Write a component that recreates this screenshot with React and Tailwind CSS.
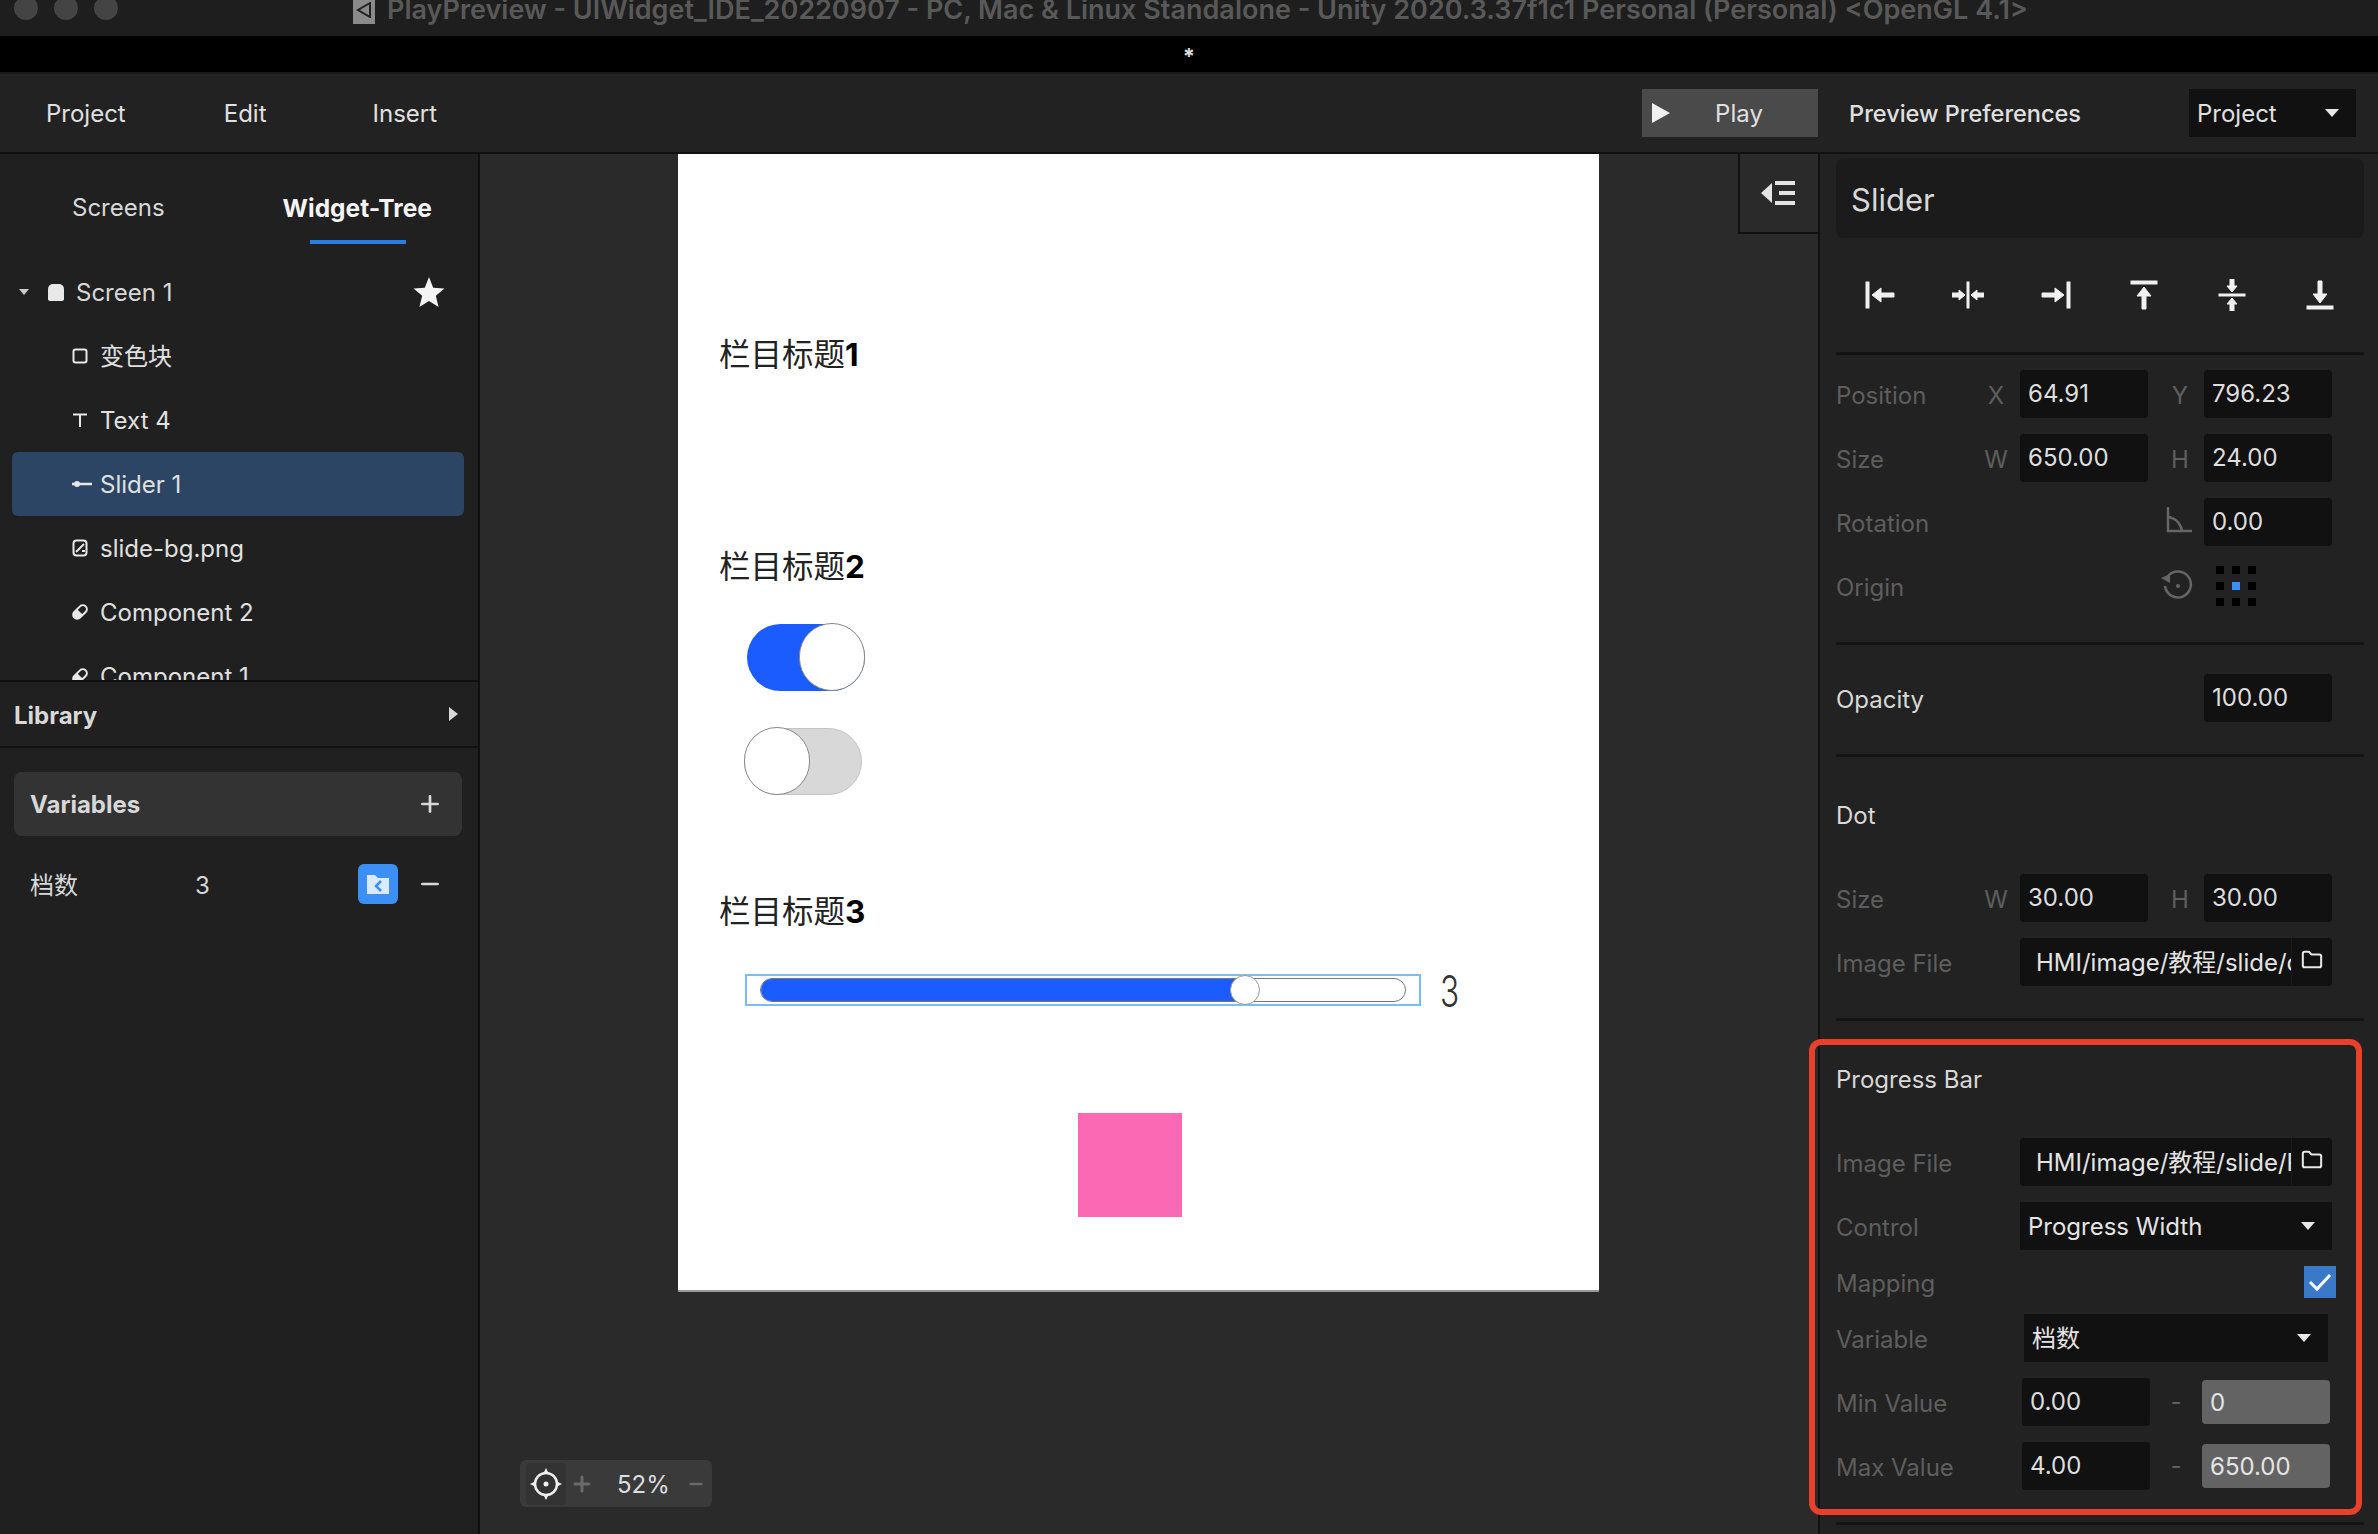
import { Folder, Plus, Minus } from 'lucide-react'

const Caret = ({ className = '' }) => (
  <svg width="16" height="10" viewBox="0 0 16 10" className={className}>
    <path d="M1 1h14L8 9z" fill="#e8e8e8" />
  </svg>
)

const Tri = ({ d, w = 32, className = '' }) => (
  <svg width={w} height={w} viewBox="0 0 32 32" className={className}>
    <g fill="#f0f0f0" stroke="#f0f0f0">{d}</g>
  </svg>
)

// alignment row in the inspector
const alignIcons = [
  <><rect x="2" y="3" width="3" height="26" /><path d="M8 16l9-7v5h13v4H17v5z" /></>,
  <><rect x="15" y="3" width="2" height="26" /><path d="M13 16l-6-5v3H0v4h7v3zM19 16l6-5v3h7v4h-7v3z" /></>,
  <><rect x="27" y="3" width="3" height="26" /><path d="M24 16l-9-7v5H2v4h13v5z" /></>,
  <><rect x="3" y="2" width="26" height="3" /><path d="M16 8l-7 9h5v13h4V17h5z" /></>,
  <><rect x="3" y="15" width="26" height="2" /><path d="M16 13l-5-6h3V0h4v7h3zM16 19l-5 6h3v7h4v-7h3z" /></>,
  <><rect x="3" y="27" width="26" height="3" /><path d="M16 24l-7-9h5V2h4v13h5z" /></>,
]

const Divider = ({ className = '' }) => <div className={`h-[3px] bg-[#141414] ${className}`} />

const Label = ({ children, w = 'w-[136px]', dim = true }) => (
  <div className={`${w} shrink-0 pt-1 ${dim ? 'text-[#5e5e5e]' : 'text-[#d8d8d8]'}`}>{children}</div>
)

const Axis = ({ children, className = 'w-[48px]' }) => (
  <div className={`${className} shrink-0 pt-1 text-center text-[#5e5e5e]`}>{children}</div>
)

const Value = ({ children, className = 'w-[128px]' }) => (
  <div className={`${className} h-12 shrink-0 rounded bg-[#111111] px-2 leading-[47px] text-[#dedede]`}>{children}</div>
)

const PairRow = ({ label, a, av, b, bv }) => (
  <div className="flex h-12 items-center">
    <Label>{label}</Label>
    <Axis>{a}</Axis>
    <Value>{av}</Value>
    <Axis className="w-[56px] pl-2">{b}</Axis>
    <Value>{bv}</Value>
  </div>
)

const SingleRow = ({ label, icon, value, dim = true }) => (
  <div className="flex h-12 items-center">
    <Label w="w-[368px]" dim={dim}>
      <div className="relative">
        {label}
        {icon}
      </div>
    </Label>
    <Value>{value}</Value>
  </div>
)

const FileRow = ({ path }) => (
  <div className="flex h-12 items-center">
    <Label w="w-[184px]">Image File</Label>
    <div className="flex h-12 w-[312px] items-center rounded bg-[#111111]">
      <div className="w-[271px] overflow-hidden whitespace-nowrap pl-4 pt-0.5 text-[#e4e4e4]">{path}</div>
      <div className="flex h-12 flex-1 items-center justify-center border-l border-[#1a1a1a]">
        <Folder size={22} strokeWidth={2.2} color="#e8e8e8" className="-mt-1" />
      </div>
    </div>
  </div>
)

const SelectRow = ({ label, value, inset = false }) => (
  <div className="flex h-12 items-center">
    <Label w={inset ? 'w-[188px]' : 'w-[184px]'}>{label}</Label>
    <div className={`flex h-12 items-center justify-between bg-[#111111] pl-2 ${inset ? 'w-[304px] pr-4' : 'w-[312px] pr-4'} text-[#e4e4e4]`}>
      <span className="pt-0.5">{value}</span>
      <Caret />
    </div>
  </div>
)

const RangeRow = ({ label, a, b }) => (
  <div className="flex h-12 items-center">
    <Label w="w-[186px]">{label}</Label>
    <Value>{a}</Value>
    <div className="w-[52px] shrink-0 text-center text-[#5e5e5e]">-</div>
    <div className="h-[44px] w-[128px] shrink-0 rounded bg-[#636363] px-2 leading-[46px] text-[#e4e4e4]">{b}</div>
  </div>
)

const TreeIcon = ({ kind }) => {
  if (kind === 'rect') {
    return (
      <svg width="16" height="16" viewBox="0 0 16 16"><rect x="1.5" y="1.5" width="13" height="13" rx="2" fill="none" stroke="#e8e8e8" strokeWidth="2" /></svg>
    )
  }
  if (kind === 'text') {
    return (
      <svg width="16" height="16" viewBox="0 0 16 16"><path d="M1 2.5h14M8 2.5V15" fill="none" stroke="#e8e8e8" strokeWidth="2" /></svg>
    )
  }
  if (kind === 'slider') {
    return (
      <svg width="20" height="16" viewBox="0 0 20 16"><path d="M0 8h20" stroke="#e8e8e8" strokeWidth="2.5" /><circle cx="5" cy="8" r="3" fill="#e8e8e8" /></svg>
    )
  }
  if (kind === 'image') {
    return (
      <svg width="16" height="18" viewBox="0 0 16 18"><rect x="1.5" y="1.5" width="13" height="15" rx="3" fill="none" stroke="#e8e8e8" strokeWidth="2" /><path d="M4 13l8-8M10 12h3" stroke="#e8e8e8" strokeWidth="2" /></svg>
    )
  }
  return (
    <svg width="16" height="18" viewBox="0 0 16 18">
      <g transform="rotate(45 8 9)">
        <rect x="4" y="1" width="8" height="16" rx="4" fill="none" stroke="#e8e8e8" strokeWidth="2" />
        <path d="M4 9h8v4a4 4 0 0 1-8 0z" fill="#e8e8e8" />
      </g>
    </svg>
  )
}

const treeItems = [
  { kind: 'rect', name: '变色块' },
  { kind: 'text', name: 'Text 4' },
  { kind: 'slider', name: 'Slider 1', active: true },
  { kind: 'image', name: 'slide-bg.png' },
  { kind: 'comp', name: 'Component 2' },
  { kind: 'comp', name: 'Component 1' },
]

const LeftPanel = () => (
  <div className="flex w-[480px] shrink-0 flex-col border-r-2 border-[#111111] bg-[#202020]">
    <div className="h-[526px] shrink-0 overflow-hidden">
      <div className="relative flex h-[106px] items-center pl-[72px] pt-0.5">
        <span className="text-[#d8d8d8]">Screens</span>
        <span className="ml-[118px] text-[24.5px] font-bold text-[#f4f4f4]">Widget-Tree</span>
        <div className="absolute left-[310px] top-[86px] h-1 w-[96px] bg-[#2a7de1]" />
      </div>
      <div className="flex h-16 items-center text-[#d8d8d8]">
        <svg width="12" height="8" viewBox="0 0 12 8" className="ml-[18px]"><path d="M1 1h10L6 7z" fill="#cccccc" /></svg>
        <div className="ml-[18px] h-[17px] w-4 rounded-t-[5px] rounded-b-[2px] bg-[#e8e8e8]" />
        <span className="ml-3 flex-1 pt-0.5">Screen 1</span>
        <svg width="32" height="31" viewBox="0 0 32 31" className="mr-[33px]">
          <path d="M16 0l4.2 10.8 11.3.8-8.7 7.2 2.8 11.2L16 24l-9.6 6 2.8-11.2L.5 11.6l11.3-.8z" fill="#f4f4f4" />
        </svg>
      </div>
      {treeItems.map((item) => (
        <div key={item.name} className={`ml-3 mr-3.5 flex h-16 items-center rounded-md pl-[60px] text-[#e0e0e0] ${item.active ? 'bg-[#2c4565]' : ''}`}>
          <div className="flex w-7 shrink-0 items-center"><TreeIcon kind={item.kind} /></div>
          <span className="pt-0.5">{item.name}</span>
        </div>
      ))}
    </div>
    <div className="flex h-[68px] shrink-0 items-center justify-between border-y-2 border-[#111111] pl-[14px] pr-5">
      <span className="pt-1 font-bold text-[#d8d8d8]">Library</span>
      <svg width="9" height="14" viewBox="0 0 9 14"><path d="M0 0l9 7-9 7z" fill="#d8d8d8" /></svg>
    </div>
    <div className="ml-[14px] mr-4 mt-[24px] flex h-16 shrink-0 items-center justify-between rounded-lg bg-[#333333] pl-4 pr-[19px]">
      <span className="pt-0.5 font-bold text-[#d8d8d8]">Variables</span>
      <Plus size={26} strokeWidth={2.5} color="#d8d8d8" />
    </div>
    <div className="mt-[28px] flex h-10 shrink-0 items-center pl-[30px] text-[#d8d8d8]">
      <span className="w-[165px] pt-1">档数</span>
      <span className="w-[163px] pt-1">3</span>
      <div className="flex h-10 w-10 items-center justify-center rounded-md bg-[#3b8ff5]">
        <svg width="24" height="22" viewBox="0 0 24 22">
          <path d="M1 2h8l3 3h11v16H1z" fill="#dceaff" />
          <path d="M15 8l-5 5 5 5" fill="none" stroke="#3b8ff5" strokeWidth="2.5" />
        </svg>
      </div>
      <Minus size={26} strokeWidth={2.5} color="#d8d8d8" className="ml-[19px]" />
    </div>
  </div>
)

const Heading = ({ n, className }) => (
  <div className={`absolute left-[41px] text-[31.5px] leading-10 text-[#222222] ${className}`}>
    栏目标题<span className="font-bold text-black">{n}</span>
  </div>
)

const Artboard = () => (
  <div className="absolute left-[198px] top-0 h-[1138px] w-[921px] border-b-2 border-[#999999] bg-white">
    <Heading n="1" className="top-[181px]" />
    <Heading n="2" className="top-[393px]" />
    <Heading n="3" className="top-[738px]" />

    <div className="absolute left-[69px] top-[470px] h-[67px] w-[118px] rounded-full bg-[#1a5cff]">
      <div className="absolute right-0 top-[-1px] h-[68px] w-[66px] rounded-full border border-[#888888] bg-white" />
    </div>
    <div className="absolute left-[66px] top-[574px] h-[67px] w-[118px] rounded-full border border-[#c4c4c4] bg-[#d8d8d8]">
      <div className="absolute left-[-1px] top-[-2px] h-[68px] w-[66px] rounded-full border border-[#888888] bg-white" />
    </div>

    <div className="absolute left-[67px] top-[820px] h-[32px] w-[676px] border-2 border-[#7bbcf5]">
      <div className="absolute left-[13px] top-[2px] h-[24px] w-[646px] rounded-full border border-[#777777] bg-white">
        <div className="h-full w-[485px] rounded-full bg-[#1a5cff]" />
      </div>
      <div className="absolute left-[483px] top-[-1px] h-[30px] w-[30px] rounded-full border border-[#999999] bg-white" />
    </div>
    <div className="absolute left-[762px] top-[812px] origin-left scale-x-[0.72] text-[44px] font-light leading-[50px] text-[#333333]">3</div>

    <div className="absolute left-[400px] top-[959px] h-[104px] w-[104px] bg-[#fb69b5]" />
  </div>
)

const Canvas = () => (
  <div className="relative flex-1 bg-[#2a2a2a]">
    <Artboard />
    <div className="absolute right-0 top-0 flex h-[80px] w-[80px] items-center justify-center border-b-2 border-l-2 border-[#111111]">
      <svg width="36" height="26" viewBox="0 0 36 26">
        <path d="M0 13L11 3v20z" fill="#e4e4e4" />
        <path d="M14 3h20M18 13h16M14 23h20" stroke="#e4e4e4" strokeWidth="4" />
      </svg>
    </div>
    <div className="absolute bottom-[27px] left-[40px] flex h-[47px] w-[192px] items-center rounded-md bg-[#3a3a3a] text-[24px]">
      <div className="ml-[6px] flex h-[42px] w-[40px] items-center justify-center rounded bg-[#333333]">
        <svg width="32" height="32" viewBox="0 0 32 32">
          <circle cx="16" cy="16" r="11" fill="none" stroke="#f0f0f0" strokeWidth="2.5" />
          <circle cx="16" cy="16" r="2.5" fill="#f0f0f0" />
          <path d="M16 0l3 6h-6zM16 32l3-6h-6zM0 16l6-3v6zM32 16l-6-3v6z" fill="#f0f0f0" />
        </svg>
      </div>
      <Plus size={24} strokeWidth={3} color="#6a6a6a" className="ml-1" />
      <span className="ml-[23px] pt-0.5 text-[#dddddd]">52%</span>
      <Minus size={18} strokeWidth={3.5} color="#6a6a6a" className="ml-[17px]" />
    </div>
  </div>
)

const RightPanel = () => (
  <div className="relative w-[560px] shrink-0 border-l-2 border-[#111111] bg-[#222222] pl-4 pr-3.5 pt-1">
    <div className="flex h-20 items-center rounded-lg bg-[#1b1b1b] pl-[15px] pt-1 text-[31px] text-[#d8d8d8]">Slider</div>
    <div className="grid h-[114px] grid-cols-6 items-center justify-items-center">
      {alignIcons.map((d, i) => (
        <Tri key={i} d={d} />
      ))}
    </div>
    <Divider />
    <div className="mt-[15px] flex flex-col gap-4">
      <PairRow label="Position" a="X" av="64.91" b="Y" bv="796.23" />
      <PairRow label="Size" a="W" av="650.00" b="H" bv="24.00" />
      <SingleRow
        label="Rotation"
        value="0.00"
        icon={
          <svg width="28" height="28" viewBox="0 0 28 28" className="absolute right-[11px] top-0">
            <path d="M3 1v24h24M3 11c8 1 13 7 14 14" fill="none" stroke="#666666" strokeWidth="2.5" />
          </svg>
        }
      />
      <div className="flex h-12 items-center">
        <Label w="w-[324px]">Origin</Label>
        <svg width="36" height="36" viewBox="0 0 36 36">
          <path d="M8 8a13 13 0 1 1-3 10" fill="none" stroke="#666666" strokeWidth="2.5" />
          <path d="M1 10l9-4 0 9z" fill="#666666" />
          <circle cx="18" cy="18" r="2" fill="#666666" />
        </svg>
        <div className="ml-5 grid grid-cols-3 gap-2">
          {[0, 1, 2, 3, 4, 5, 6, 7, 8].map((i) => (
            <div key={i} className={`h-2 w-2 ${i === 4 ? 'bg-[#3b8ff5]' : 'bg-black'}`} />
          ))}
        </div>
      </div>
    </div>
    <Divider className="mt-[32px]" />
    <div className="mt-[29px]">
      <SingleRow label="Opacity" value="100.00" dim={false} />
    </div>
    <Divider className="mt-[32px]" />
    <div className="flex h-[117px] items-center text-[#d8d8d8]">Dot</div>
    <div className="flex flex-col gap-4">
      <PairRow label="Size" a="W" av="30.00" b="H" bv="30.00" />
      <FileRow path="HMI/image/教程/slide/dot.png" />
    </div>
    <Divider className="mt-[32px]" />
    <div className="flex h-[117px] items-center text-[#d8d8d8]">Progress Bar</div>
    <div className="flex flex-col gap-4">
      <FileRow path="HMI/image/教程/slide/Progress.png" />
      <SelectRow label="Control" value="Progress Width" />
      <div className="flex h-8 items-center justify-between">
        <Label>Mapping</Label>
        <div className="mr-7 flex h-8 w-8 items-center justify-center bg-[#3a78c8]">
          <svg width="24" height="20" viewBox="0 0 24 20"><path d="M2 10l7 7L22 3" fill="none" stroke="#ffffff" strokeWidth="3" /></svg>
        </div>
      </div>
      <SelectRow label="Variable" value="档数" inset />
      <RangeRow label="Min Value" a="0.00" b="0" />
      <RangeRow label="Max Value" a="4.00" b="650.00" />
    </div>
    <Divider className="mt-[32px]" />
    {/* annotation frame drawn over the screenshot */}
    <div className="absolute left-[-11px] top-[885px] h-[476px] w-[553px] rounded-xl border-[6px] border-[#e8402a]" />
  </div>
)

const App = () => {
  return (
    <div className="flex h-[1534px] w-[2378px] flex-col overflow-hidden bg-black font-['Inter','Noto_Sans_CJK_SC',sans-serif] text-[24px]">
      <div className="relative flex h-9 shrink-0 items-start overflow-hidden bg-[#1e1e1e]">
        <div className="-mt-1 ml-3.5 flex gap-4">
          <div className="h-6 w-6 rounded-full bg-[#444444]" />
          <div className="h-6 w-6 rounded-full bg-[#444444]" />
          <div className="h-6 w-6 rounded-full bg-[#444444]" />
        </div>
        <div className="-mt-2.5 ml-[235px] flex items-center whitespace-nowrap text-[27px] font-semibold text-[#595959]">
          <div className="mr-3 flex h-[28px] w-[22px] items-center justify-center bg-[#8a8a8a]">
            <svg width="16" height="16" viewBox="0 0 16 16"><path d="M14 1L2 8l12 7z" fill="none" stroke="#222222" strokeWidth="2" /></svg>
          </div>
          PlayPreview - UIWidget_IDE_20220907 - PC, Mac &amp; Linux Standalone - Unity 2020.3.37f1c1 Personal (Personal) &lt;OpenGL 4.1&gt;
        </div>
      </div>
      <div className="flex h-9 shrink-0 items-center justify-center bg-black pt-1 text-[22px] font-bold leading-none text-[#dddddd]">*</div>
      <div className="flex h-[82px] shrink-0 items-center border-y-2 border-y-[#1a1a1a] border-b-[#111111] bg-[#222222] text-[#e0e0e0]">
        <span className="ml-[46px] pt-0.5">Project</span>
        <span className="ml-[98px] pt-0.5">Edit</span>
        <span className="ml-[106px] flex-1 pt-0.5">Insert</span>
        <div className="flex h-12 w-[176px] items-center bg-[#4a4a4a] pl-2.5">
          <svg width="18" height="20" viewBox="0 0 18 20"><path d="M0 0l18 10L0 20z" fill="#f0f0f0" /></svg>
          <span className="ml-[45px] pt-0.5">Play</span>
        </div>
        <span className="ml-[31px] pt-0.5 text-[23.5px] font-medium">Preview Preferences</span>
        <div className="ml-[108px] mr-[22px] flex h-12 w-[167px] items-center justify-between bg-[#111111] pl-2 pr-4">
          <span className="pt-0.5">Project</span>
          <Caret />
        </div>
      </div>
      <div className="flex min-h-0 flex-1">
        <LeftPanel />
        <Canvas />
        <RightPanel />
      </div>
    </div>
  )
}

export default App
